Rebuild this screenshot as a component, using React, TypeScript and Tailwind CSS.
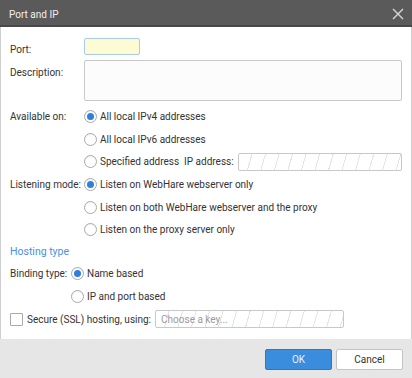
import React from 'react';

const hatch =
  'bg-[repeating-linear-gradient(106deg,transparent_0px,transparent_12px,#e4e4e4_12px,#e4e4e4_13px)]';

const Radio: React.FC<{ checked?: boolean }> = ({ checked }) => (
  <span className="w-[13px] h-[13px] rounded-full border border-[#a9a9a9] bg-white flex items-center justify-center shrink-0 shadow-[inset_0_1px_1px_rgba(0,0,0,0.06)]">
    {checked && <span className="w-[7px] h-[7px] rounded-full bg-[#2f7fe0]" />}
  </span>
);

const Option: React.FC<{ checked?: boolean; children: React.ReactNode }> = ({ checked, children }) => (
  <div className="flex items-center gap-[3px] whitespace-nowrap">
    <Radio checked={checked} />
    <span>{children}</span>
  </div>
);

export default function App() {
  return (
    <div
      className="w-[412px] h-[378px] flex flex-col text-[10px] leading-[13px] text-[#333] bg-white overflow-hidden"
      style={{ fontFamily: 'Roboto, "Liberation Sans", sans-serif' }}
    >
      {/* title bar */}
      <div className="h-[27px] shrink-0 bg-[#5a5a5a] border-b-2 border-[#484848] flex items-center justify-between pl-[9px] pr-[8px]">
        <span className="text-[#f0f0f0] pt-[3px]">Port and IP</span>
        <svg width="12" height="12" viewBox="0 0 12 12" className="text-[#d8d8d8] mt-[3px]">
          <path d="M1 1L11 11M11 1L1 11" stroke="currentColor" strokeWidth="1.4" />
        </svg>
      </div>

      {/* body */}
      <div className="flex-1 flex flex-col px-[9px] pt-[11px] border-x border-[#cfcfcf] whitespace-nowrap">
        <div className="flex items-center h-[17px]">
          <span className="w-[74px] pt-[5px]">Port:</span>
          <div className="w-[56px] h-[17px] bg-[#fdfbd4] border border-[#a8cbea] rounded-[2px]" />
        </div>

        <div className="flex mt-[5px]">
          <span className="w-[74px] pt-[6px]">Description:</span>
          <div className="flex-1 h-[41px] border border-[#c8c8c8] rounded-[2px] bg-[#fcfcfc]" />
        </div>

        <div className="flex mt-[4px]">
          <span className="w-[74px] h-[22.7px] flex items-center">Available on:</span>
          <div className="flex-1 flex flex-col">
            <div className="h-[22.7px] flex items-center">
              <Option checked>All local IPv4 addresses</Option>
            </div>
            <div className="h-[22.7px] flex items-center">
              <Option>All local IPv6 addresses</Option>
            </div>
            <div className="h-[22.7px] flex items-center gap-[4px]">
              <Option>Specified address&nbsp; IP address:</Option>
              <div className={`flex-1 h-[18px] border border-[#c8c8c8] rounded-[2px] ${hatch}`} />
            </div>
          </div>
        </div>

        <div className="flex">
          <span className="w-[74px] h-[22.7px] flex items-center">Listening mode:</span>
          <div className="flex-1 flex flex-col">
            <div className="h-[22.7px] flex items-center">
              <Option checked>Listen on WebHare webserver only</Option>
            </div>
            <div className="h-[22.7px] flex items-center">
              <Option>Listen on both WebHare webserver and the proxy</Option>
            </div>
            <div className="h-[22.7px] flex items-center">
              <Option>Listen on the proxy server only</Option>
            </div>
          </div>
        </div>

        <div className="h-[21px] flex items-center text-[#4a90e2] text-[10.5px]">Hosting type</div>

        <div className="flex">
          <span className="w-[61px] h-[23px] flex items-center">Binding type:</span>
          <div className="flex flex-col">
            <div className="h-[23px] flex items-center">
              <Option checked>Name based</Option>
            </div>
            <div className="h-[23px] flex items-center">
              <Option>IP and port based</Option>
            </div>
          </div>
        </div>

        <div className="h-[22px] flex items-center">
          <span className="w-[13px] h-[13px] border border-[#a9a9a9] rounded-[1px] bg-white shrink-0" />
          <span className="ml-[4px]">Secure (SSL) hosting, using:</span>
          <div className={`ml-[4px] w-[189px] h-[18px] border border-[#c8c8c8] rounded-[2px] flex items-center pl-[5px] text-[#9a9a9a] ${hatch}`}>
            Choose a key...
          </div>
        </div>
      </div>

      {/* footer */}
      <div className="h-[39px] shrink-0 bg-[#e6e6e6] flex items-start justify-end gap-[4px] pt-[10px] pr-[9px]">
        <button className="w-[67px] h-[21px] bg-[#3a8ddc] border border-[#2f78c4] rounded-[2px] text-[#e8f1fb]">
          OK
        </button>
        <button className="w-[67px] h-[21px] bg-white border border-[#c4c4c4] rounded-[2px] text-[#333]">
          Cancel
        </button>
      </div>
    </div>
  );
}
